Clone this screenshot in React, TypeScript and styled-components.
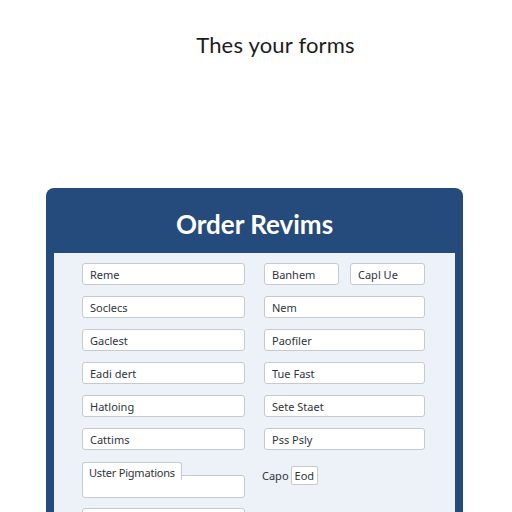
import styled, { createGlobalStyle } from 'styled-components';

const Global = createGlobalStyle`
  body {
    margin: 0;
    background: #ffffff;
    font-family: 'Noto Sans', 'Liberation Sans', sans-serif;
    overflow: hidden;
  }
`;

const Page = styled.div`
  width: 512px;
  height: 512px;
  display: flex;
  flex-direction: column;
`;

const Intro = styled.h2`
  margin: 31px 0 0 39px;
  text-align: center;
  font-family: 'Lato', 'Noto Sans', sans-serif;
  font-weight: 400;
  font-size: 22px;
  line-height: 28px;
  color: #1c1c1e;
  letter-spacing: 0.2px;
`;

const Card = styled.div`
  margin: 129px 0 0 46px;
  width: 417px;
  background: #254a7c;
  border-radius: 8px 8px 0 0;
  padding: 0 8px;
  box-sizing: border-box;
  flex: 1;
  display: flex;
  flex-direction: column;
`;

const Title = styled.h1`
  margin: 0;
  height: 65px;
  display: flex;
  align-items: center;
  justify-content: center;
  color: #ffffff;
  font-family: 'Lato', 'Noto Sans', sans-serif;
  font-weight: 700;
  font-size: 26px;
  padding-top: 6px;
  box-sizing: border-box;
`;

const Panel = styled.div`
  flex: 1;
  background: #edf2f8;
  padding: 10px 30px 0 28px;
  display: grid;
  grid-template-columns: 163px 161px;
  column-gap: 19px;
  row-gap: 11px;
  align-content: start;
`;

const Field = styled.div`
  height: 22px;
  background: #ffffff;
  border: 1px solid #c5cad1;
  border-radius: 3px;
  box-sizing: border-box;
  display: flex;
  align-items: center;
  padding-left: 7px;
  font-size: 11px;
  color: #30343b;
`;

const Split = styled.div`
  display: flex;
  justify-content: space-between;
  & > div {
    width: 75px;
  }
`;

const AreaWrap = styled.div`
  position: relative;
  margin-top: 1px;
  height: 36px;
`;

const Area = styled.div`
  position: absolute;
  left: 0;
  right: 0;
  top: 13px;
  bottom: 0;
  background: #ffffff;
  border: 1px solid #c5cad1;
  border-radius: 3px;
`;

const Tab = styled.div`
  position: absolute;
  left: 0;
  top: 0;
  width: 100px;
  height: 18px;
  background: #ffffff;
  border: 1px solid #c5cad1;
  border-bottom: none;
  border-radius: 3px 3px 0 0;
  box-sizing: border-box;
  padding: 2px 0 0 6px;
  font-size: 11px;
  letter-spacing: -0.2px;
  white-space: nowrap;
  color: #30343b;
  z-index: 1;
`;

const Inline = styled.div`
  display: flex;
  align-items: center;
  gap: 2px;
  margin-left: -2px;
  font-size: 11px;
  color: #30343b;
  height: 22px;
  margin-top: 3px;
`;

const Small = styled.span`
  border: 1px solid #c5cad1;
  border-radius: 2px;
  background: #ffffff;
  padding: 1px 3px;
`;

const NextField = styled(Field)`
  margin-top: -1px;
`;

const left = ['Reme', 'Soclecs', 'Gaclest', 'Eadi dert', 'Hatloing', 'Cattims'];
const right = ['Nem', 'Paofiler', 'Tue Fast', 'Sete Staet', 'Pss Psly'];

export default function App() {
  return (
    <Page>
      <Global />
      <Intro>Thes your forms</Intro>
      <Card>
        <Title>Order Revims</Title>
        <Panel>
          <Field>{left[0]}</Field>
          <Split>
            <Field>Banhem</Field>
            <Field>Capl Ue</Field>
          </Split>
          {right.map((r, i) => [
            <Field key={'l' + i}>{left[i + 1]}</Field>,
            <Field key={'r' + i}>{r}</Field>,
          ])}
          <AreaWrap>
            <Tab>Uster Pigmations</Tab>
            <Area />
          </AreaWrap>
          <Inline>
            Capo <Small>Eod</Small>
          </Inline>
          <NextField />
        </Panel>
      </Card>
    </Page>
  );
}
